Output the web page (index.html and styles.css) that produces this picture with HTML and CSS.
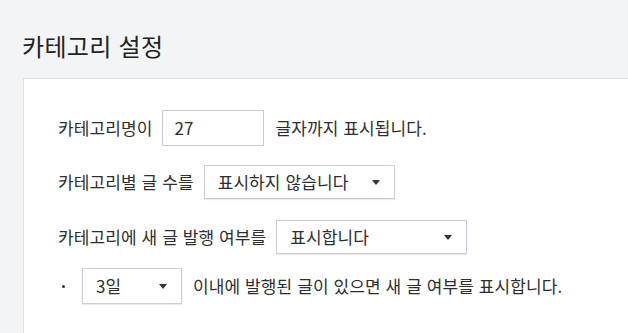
FILE: index.html
```html
<!DOCTYPE html>
<html lang="ko">
<head>
<meta charset="utf-8">
<title>카테고리 설정</title>
<link rel="stylesheet" href="styles.css">
</head>
<body>
<h1 class="title">카테고리 설정</h1>
<section class="panel">
  <div class="row row-1">
    <span class="label">카테고리명이</span>
    <div class="input">27</div>
    <span class="label">글자까지 표시됩니다.</span>
  </div>
  <div class="row row-2">
    <span class="label">카테고리별 글 수를</span>
    <div class="select select-wide">
      <span>표시하지 않습니다</span>
      <svg class="caret" width="8" height="5" viewBox="0 0 8 5"><path d="M0 0H8L4 5Z"/></svg>
    </div>
  </div>
  <div class="row row-3">
    <span class="label">카테고리에 새 글 발행 여부를</span>
    <div class="select select-wide">
      <span>표시합니다</span>
      <svg class="caret" width="8" height="5" viewBox="0 0 8 5"><path d="M0 0H8L4 5Z"/></svg>
    </div>
  </div>
  <div class="row row-4">
    <span class="bullet"></span>
    <div class="select select-small">
      <span>3일</span>
      <svg class="caret" width="8" height="5" viewBox="0 0 8 5"><path d="M0 0H8L4 5Z"/></svg>
    </div>
    <span class="label">이내에 발행된 글이 있으면 새 글 여부를 표시합니다.</span>
  </div>
</section>
</body>
</html>
```
FILE: styles.css
```css
html, body {
  margin: 0;
  padding: 0;
}
body {
  background: #f3f4f6;
  font-family: "Noto Sans CJK KR", "Noto Sans", sans-serif;
  color: #2e2e2e;
  height: 333px;
  overflow: hidden;
}
.title {
  margin: 0;
  padding: 28px 0 0 22px;
  height: 78px;
  box-sizing: border-box;
  font-size: 24px;
  font-weight: 400;
  line-height: 36px;
  color: #222;
  letter-spacing: 0.3px;
}
.panel {
  margin-left: 23px;
  background: #fff;
  border-top: 1px solid #dde1e6;
  border-left: 1px solid #dde1e6;
  padding: 31px 0 40px 34px;
}
.row {
  display: flex;
  align-items: center;
  font-size: 17px;
  line-height: 24px;
  letter-spacing: 0.1px;
}
.row-2 { margin-top: 19px; }
.row-3 { margin-top: 21px; }
.row-4 { margin-top: 14px; }
.label {
  white-space: nowrap;
}
.input {
  box-sizing: border-box;
  width: 102px;
  height: 36px;
  border: 1px solid #c8cfd8;
  margin: 0 11px 0 10px;
  padding-left: 11px;
  display: flex;
  align-items: center;
}
.select {
  box-sizing: border-box;
  height: 34px;
  border: 1px solid #c8cfd8;
  box-shadow: 0 1px 1px rgba(0, 0, 0, 0.08);
  display: flex;
  align-items: center;
  justify-content: space-between;
  padding: 0 14px 0 13px;
  background: #fff;
}
.select-wide {
  width: 191px;
  margin-left: 10px;
}
.select-small {
  width: 100px;
  height: 36px;
  margin-right: 11px;
}
.caret {
  fill: #333;
  display: block;
}
.bullet {
  width: 3px;
  height: 3px;
  border-radius: 50%;
  background: #333;
  margin: 0 17px 0 4px;
}
```
